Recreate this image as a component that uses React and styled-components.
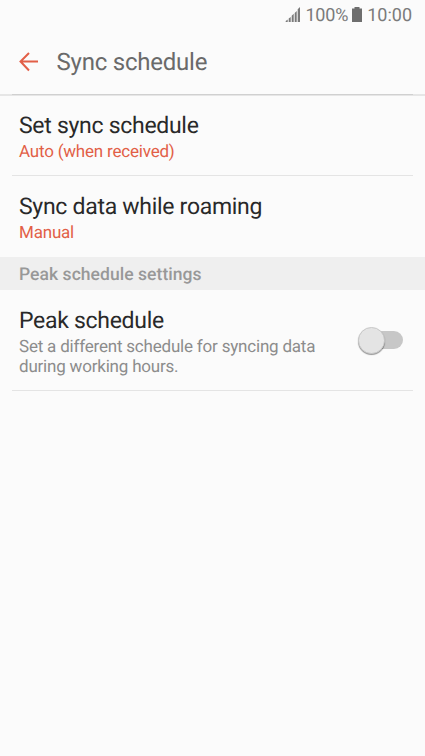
import React from 'react'
import styled, { createGlobalStyle } from 'styled-components'

const colors = {
    background: '#fbfbfb',
    band: '#efefef',
    accent: '#e25f47',
    title: '#292929',
    header: '#6a6a6a',
    muted: '#8c8c8c',
    section: '#989898',
    status: '#7a7a7a',
    divider: '#e4e4e4'
}

const GlobalStyles = createGlobalStyle`
    * {
        box-sizing: border-box;
        padding: 0;
        margin: 0;
    }
    body {
        background-color: ${colors.background};
        font-family: Roboto, sans-serif;
        text-rendering: geometricPrecision;
    }
`

const Screen = styled.div`
    display: flex;
    flex-direction: column;
    min-height: 756px;
    width: 100%;
    background: ${colors.background};
`

const StatusBar = styled.div`
    display: flex;
    justify-content: flex-end;
    align-items: center;
    height: 30px;
    padding-right: 13px;
    color: ${colors.status};
    font-size: 18px;
    line-height: 28px;
    svg {
        display: block;
        margin-bottom: 2px;
    }
`

const Battery = styled.span`
    margin: 0 4px 0 5px;
    padding-top: 2px;
    letter-spacing: -0.2px;
`

const Clock = styled.span`
    margin-left: 5px;
    padding-top: 2px;
`

const Header = styled.header`
    display: flex;
    align-items: center;
    height: 64px;
    padding-left: 18px;
`

const HeaderLine = styled.div`
    height: 2px;
    padding: 0 12px;
    background: #e6e6e6;
    &::before {
        content: '';
        display: block;
        height: 1px;
        background: #d0d0d0;
    }
`

const BackButton = styled.button`
    width: 21px;
    height: 20px;
    background: none;
    border: none;
    svg {
        display: block;
    }
`

const HeaderTitle = styled.h1`
    margin-left: 17.5px;
    color: ${colors.header};
    font-size: 24px;
    font-weight: 400;
    line-height: 30px;
    letter-spacing: -0.22px;
`

const Row = styled.div`
    display: flex;
    justify-content: space-between;
    align-items: center;
    height: ${props => props.$height}px;
    margin: 0 12px;
    padding: 0 10px 0 7px;
    border-bottom: ${props => props.$divided ? `1px solid ${colors.divider}` : 'none'};
`

const RowBody = styled.div`
    padding-top: 2px;
`

const RowTitle = styled.h2`
    color: ${colors.title};
    font-size: 23px;
    font-weight: 400;
    line-height: 29px;
    letter-spacing: -0.29px;
`

const RowText = styled.p`
    max-width: 310px;
    padding-top: 2px;
    color: ${props => props.$accent ? colors.accent : colors.muted};
    font-size: 17px;
    line-height: 20px;
    letter-spacing: -0.2px;
`

const SectionLabel = styled.h3`
    height: 33px;
    padding-left: 19px;
    background: ${colors.band};
    color: ${colors.section};
    font-size: 17.5px;
    font-weight: 500;
    line-height: 36px;
    letter-spacing: 0.05px;
`

const Track = styled.button`
    display: flex;
    align-items: center;
    width: 42px;
    height: 18px;
    background: #c7c7c7;
    border: none;
    border-radius: 9px;
`

const Thumb = styled.span`
    flex: none;
    width: 27px;
    height: 27px;
    margin-left: -3px;
    background: #e4e4e4;
    border: 1px solid #c9c9c9;
    border-radius: 50%;
    box-shadow: 0 1px 1px rgba(0, 0, 0, 0.4);
`

const SignalIcon = () => (
    <svg width="15" height="15" viewBox="0 0 15 15" fill={colors.status}>
        <path d="M.7 14l2-1.6V15h-2zM3.7 11.5l2-1.5v5h-2zM6.7 8.8l2-2V15h-2zM9.7 6l2-2v11h-2zM12.7 2.3L15 0v15h-2.3z" />
    </svg>
)

const BatteryIcon = () => (
    <svg width="10" height="15" viewBox="0 0 10 15" fill="#6e6e6e">
        <path d="M2.5 0h5v1.5H10V15H0V1.5h2.5z" />
    </svg>
)

const BackIcon = () => (
    <svg width="21" height="20" viewBox="0 0 21 20" fill="none" stroke={colors.accent} strokeWidth="2">
        <path d="M20 9.5H2.5M11 1L2.5 9.5l8.5 9" />
    </svg>
)

const App = () => (
    <Screen>
        <GlobalStyles />
        <StatusBar>
            <SignalIcon />
            <Battery>100%</Battery>
            <BatteryIcon />
            <Clock>10:00</Clock>
        </StatusBar>
        <Header>
            <BackButton aria-label="Back"><BackIcon /></BackButton>
            <HeaderTitle>Sync schedule</HeaderTitle>
        </Header>
        <HeaderLine />
        <Row $height={80} $divided>
            <RowBody>
                <RowTitle>Set sync schedule</RowTitle>
                <RowText $accent>Auto (when received)</RowText>
            </RowBody>
        </Row>
        <Row $height={81}>
            <RowBody>
                <RowTitle>Sync data while roaming</RowTitle>
                <RowText $accent>Manual</RowText>
            </RowBody>
        </Row>
        <SectionLabel>Peak schedule settings</SectionLabel>
        <Row $height={101} $divided>
            <RowBody>
                <RowTitle>Peak schedule</RowTitle>
                <RowText>Set a different schedule for syncing data during working hours.</RowText>
            </RowBody>
            <Track role="switch" aria-checked="false" aria-label="Peak schedule">
                <Thumb />
            </Track>
        </Row>
    </Screen>
)

export default App
